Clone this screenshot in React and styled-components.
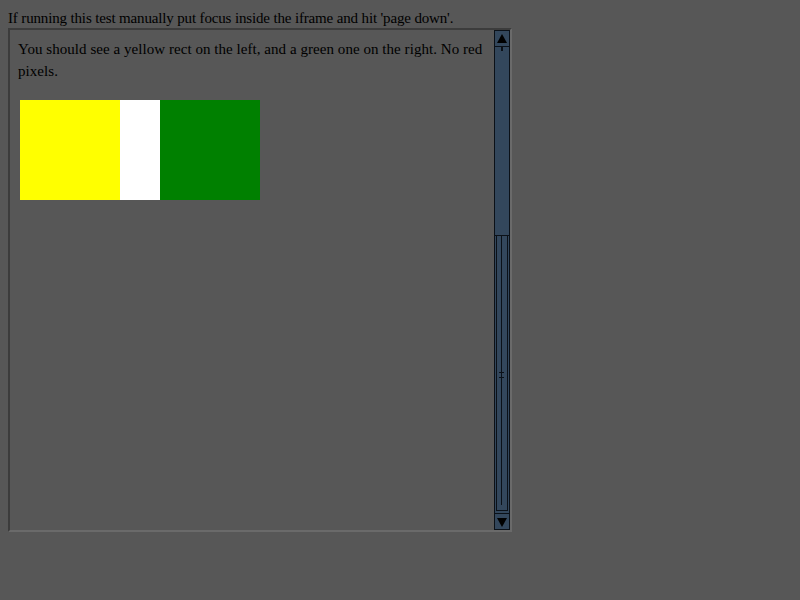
import styled, { createGlobalStyle } from "styled-components";

const GlobalStyle = createGlobalStyle`
  html, body {
    margin: 0;
    background: #575757;
  }
  body {
    padding: 8px;
    font-family: "Liberation Serif", "Times New Roman", serif;
    font-size: 15px;
    color: #000;
  }
`;

const Note = styled.div`
  line-height: 20px;
  height: 20px;
  letter-spacing: -0.15px;
`;

const Frame = styled.div`
  width: 500px;
  height: 500px;
  border-style: solid;
  border-width: 2px;
  border-color: #3c3c3c #6a6a6a #6a6a6a #3c3c3c;
  display: flex;
`;

const FrameBody = styled.div`
  flex: 1;
  padding: 8px 8px 0 8px;
`;

const Para = styled.p`
  margin: 0 0 18px 0;
  line-height: 22px;
  letter-spacing: 0.05px;
`;

const Rects = styled.div`
  display: flex;
  margin-left: 2px;
`;

const Rect = styled.div`
  width: ${(p) => p.$w}px;
  height: 100px;
  background: ${(p) => p.$color};
`;

const Scrollbar = styled.div`
  width: 16px;
  display: flex;
  flex-direction: column;
  background: #33475c;
  border: 1px solid #0b1118;
  box-sizing: border-box;
`;

const ArrowButton = styled.div`
  height: 16px;
  flex: none;
  display: flex;
  align-items: center;
  justify-content: center;
  border-${(p) => (p.$down ? "top" : "bottom")}: 1px solid #0b1118;
  box-sizing: border-box;
`;

const Track = styled.div`
  flex: 1;
  display: flex;
  flex-direction: column;
`;

const TrackSpace = styled.div`
  height: 188px;
  flex: none;
  position: relative;
`;

const Stem = styled.div`
  position: absolute;
  left: 6px;
  top: 0;
  width: 2px;
  height: 4px;
  background: #0b1118;
`;

const Thumb = styled.div`
  flex: 1;
  margin-bottom: 2px;
  border-top: 1px solid #0b1118;
  position: relative;
`;

const ThumbInner = styled.div`
  position: absolute;
  left: 1px;
  right: 1px;
  top: 0;
  bottom: 0;
  border: 1px solid #0b1118;
  border-top: none;
`;

const ThumbLine = styled.div`
  position: absolute;
  left: 6px;
  top: 0;
  bottom: 6px;
  width: 1px;
  background: #0b1118;
`;

const Grip = styled.div`
  position: absolute;
  left: 4px;
  top: 136px;
  width: 5px;
  height: 6px;
  border-top: 1px solid #0b1118;
  border-bottom: 1px solid #0b1118;
  box-sizing: border-box;
`;

const Arrow = ({ down }) => (
  <svg width="12" height="12" viewBox="0 0 12 12">
    <path d={down ? "M1 2 L11 2 L6 11 Z" : "M1 10 L11 10 L6 1 Z"} fill="#000" />
  </svg>
);

export default function App() {
  return (
    <>
      <GlobalStyle />
      <Note>If running this test manually put focus inside the iframe and hit 'page down'.</Note>
      <Frame>
        <FrameBody>
          <Para>
            You should see a yellow rect on the left, and a green one on the right. No red pixels.
          </Para>
          <Rects>
            <Rect $w={100} $color="#ffff00" />
            <Rect $w={40} $color="#ffffff" />
            <Rect $w={100} $color="#008000" />
          </Rects>
        </FrameBody>
        <Scrollbar>
          <ArrowButton>
            <Arrow />
          </ArrowButton>
          <Track>
            <TrackSpace>
              <Stem />
            </TrackSpace>
            <Thumb>
              <ThumbInner />
              <ThumbLine />
              <Grip />
            </Thumb>
          </Track>
          <ArrowButton $down>
            <Arrow down />
          </ArrowButton>
        </Scrollbar>
      </Frame>
    </>
  );
}
